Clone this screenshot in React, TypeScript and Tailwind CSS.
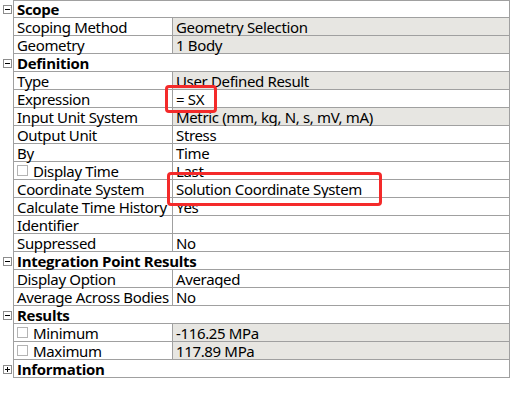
import React from "react";

type Row =
  | { kind: "header"; label: string; expanded: boolean }
  | { kind: "prop"; label: string; value: string; gray?: boolean; checkbox?: boolean };

const rows: Row[] = [
  { kind: "header", label: "Scope", expanded: true },
  { kind: "prop", label: "Scoping Method", value: "Geometry Selection", gray: true },
  { kind: "prop", label: "Geometry", value: "1 Body", gray: true },
  { kind: "header", label: "Definition", expanded: true },
  { kind: "prop", label: "Type", value: "User Defined Result", gray: true },
  { kind: "prop", label: "Expression", value: "= SX" },
  { kind: "prop", label: "Input Unit System", value: "Metric (mm, kg, N, s, mV, mA)", gray: true },
  { kind: "prop", label: "Output Unit", value: "Stress" },
  { kind: "prop", label: "By", value: "Time" },
  { kind: "prop", label: "Display Time", value: "Last", checkbox: true },
  { kind: "prop", label: "Coordinate System", value: "Solution Coordinate System" },
  { kind: "prop", label: "Calculate Time History", value: "Yes" },
  { kind: "prop", label: "Identifier", value: "" },
  { kind: "prop", label: "Suppressed", value: "No" },
  { kind: "header", label: "Integration Point Results", expanded: true },
  { kind: "prop", label: "Display Option", value: "Averaged" },
  { kind: "prop", label: "Average Across Bodies", value: "No" },
  { kind: "header", label: "Results", expanded: true },
  { kind: "prop", label: "Minimum", value: "-116.25 MPa", gray: true, checkbox: true },
  { kind: "prop", label: "Maximum", value: "117.89 MPa", gray: true, checkbox: true },
  { kind: "header", label: "Information", expanded: false },
];

function ExpandBox({ expanded }: { expanded: boolean }) {
  return (
    <svg width="9" height="9" viewBox="0 0 9 9" className="block">
      <rect x="0.5" y="0.5" width="8" height="8" fill="#fff" stroke="#8c8c8c" />
      <line x1="2" y1="4.5" x2="7" y2="4.5" stroke="#000" />
      {!expanded && <line x1="4.5" y1="2" x2="4.5" y2="7" stroke="#000" />}
    </svg>
  );
}

export default function App() {
  return (
    <div className="relative w-[511px] h-[418px] bg-white text-black font-['Noto_Sans',sans-serif] text-[15px] tracking-[-0.35px] leading-[18px] overflow-hidden">
      <div className="flex flex-col">
        {rows.map((r, i) => (
          <div key={i} className="flex h-[18px]">
            <div className="w-[13px] flex items-center justify-center pl-[2px]">
              {r.kind === "header" && <ExpandBox expanded={r.expanded} />}
            </div>
            <div
              className={`w-[497px] flex border-l border-r border-b border-[#a0a0a0] ${
                i === 0 ? "border-t" : ""
              }`}
            >
              {r.kind === "header" ? (
                <div className="pl-[3px] flex items-center font-['Open_Sans',sans-serif] font-bold tracking-[-0.3px] whitespace-nowrap">
                  {r.label}
                </div>
              ) : (
                <>
                  <div className="w-[159px] shrink-0 border-r border-[#a0a0a0] pl-[3px] flex items-center whitespace-nowrap">
                    {r.checkbox && (
                      <span className="w-[11px] h-[11px] border border-[#b4b4b4] bg-white mr-[5px] shrink-0" />
                    )}
                    <span>{r.label}</span>
                  </div>
                  <div
                    className={`flex-1 pl-[3px] flex items-center whitespace-nowrap ${
                      r.gray ? "bg-[#e7e6e2]" : "bg-white"
                    }`}
                  >
                    {r.value}
                  </div>
                </>
              )}
            </div>
          </div>
        ))}
      </div>
      <div className="absolute left-[165px] top-[85px] w-[52px] h-[28px] border-[3px] border-[#f42a2a] rounded-[4px]" />
      <div className="absolute left-[167px] top-[172px] w-[215px] h-[34px] border-[3px] border-[#f42a2a] rounded-[4px]" />
    </div>
  );
}
